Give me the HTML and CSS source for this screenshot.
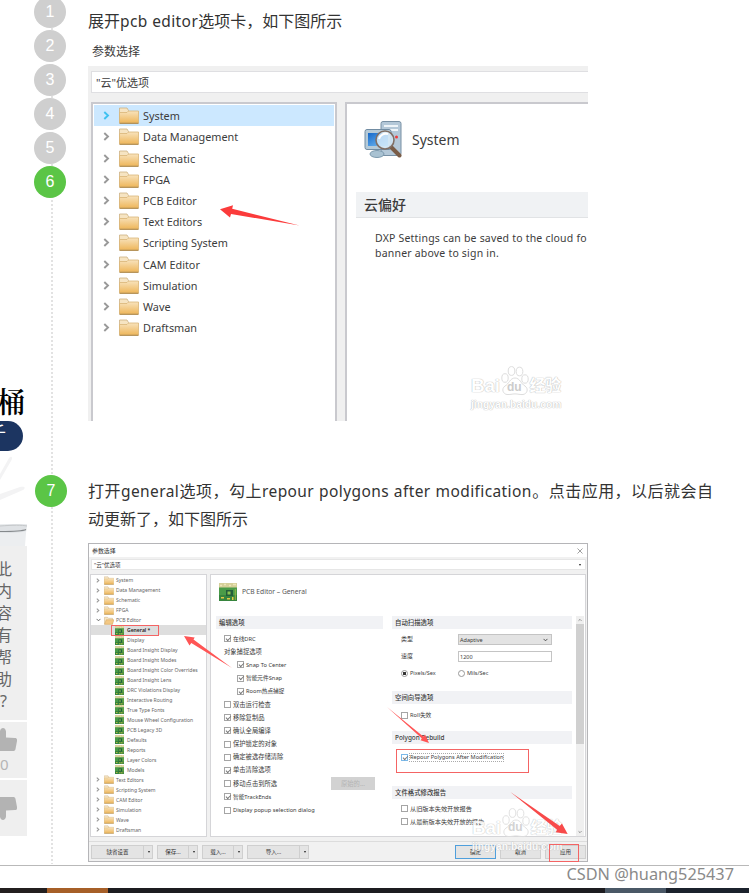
FILE: index.html
```html
<!DOCTYPE html>
<html lang="zh-CN">
<head>
    <meta charset="UTF-8">
    <meta name="viewport" content="width=device-width, initial-scale=1.0">
    <title>百度经验</title>
    <link rel="stylesheet" href="styles.css">
</head>
<body>
    <svg class="sprite" width="0" height="0">
        <defs>
            <linearGradient id="folderFill" x1="0" y1="0" x2="0" y2="1">
                <stop offset="0" stop-color="#f8e3bd"/>
                <stop offset="1" stop-color="#eeb65a"/>
            </linearGradient>
            <linearGradient id="screenFill" x1="0" y1="0" x2="1" y2="1">
                <stop offset="0" stop-color="#1668c8"/>
                <stop offset="1" stop-color="#7cc4f8"/>
            </linearGradient>
        </defs>
        <symbol id="folder" viewBox="0 0 20 17">
            <path d="M.5 15V1h7.500l1.500 2.500V15z" fill="#f6e4c2" stroke="#cdb184" stroke-width=".8"/>
            <path d="M.5 16V5.500H8l1.500-1.500h10v12z" fill="url(#folderFill)" stroke="#d9b577" stroke-width=".8"/>
            <path d="M.5 16.300h19" stroke="#a98242" stroke-width="1"/>
        </symbol>
        <symbol id="folder-open" viewBox="0 0 20 17">
            <path d="M1 16V2h6l2 2h8v12z" fill="#f6e4c2" stroke="#cdb184"/>
            <path d="M1 16l3.500-9H20l-3 9z" fill="#f3c884" stroke="#cc9d50" stroke-width=".8"/>
        </symbol>
        <symbol id="chevron" viewBox="0 0 7 9">
            <path d="M1.300 1l3.700 3.500-3.700 3.500" fill="none" stroke="currentColor" stroke-width="1.900"/>
        </symbol>
        <symbol id="chevron-down" viewBox="0 0 9 7">
            <path d="M1 1.500l3.500 3.500L8 1.500" fill="none" stroke="currentColor" stroke-width="1.500"/>
        </symbol>
        <symbol id="board" viewBox="0 0 18 18">
            <path d="M0 0h18v6H0z" fill="#d5cf98"/>
            <path d="M0 4.500h18V18H0z" fill="#4a9b48"/>
            <path d="M0 12h18v6H0z" fill="#37853e"/>
            <path d="M1 2.500h2m2-1h2m3 1h2m2-1h3" stroke="#eee6b8" stroke-width="1.500"/>
            <path d="M7 7h7v6H7z" fill="#245e3b"/>
            <path d="M8.500 8.500h3v3h-3z" fill="#8ac44f"/>
            <path d="M2 14h3v1.500H2zM8 15h3v1.500H8zM13 14h1.500v3H13z" fill="#e4c846"/>
            <path d="M16.300 6v11" stroke="#a9bd47" stroke-width=".8"/>
        </symbol>
        <symbol id="arrow-se" viewBox="0 0 60 45">
            <path d="M0 0L49 39.500l-1.500 2.500L60 44 54 33l-2.300 2.600z" fill="#f84a4a"/>
        </symbol>
        <symbol id="paw" viewBox="0 0 28 30">
            <ellipse cx="4" cy="12" rx="3.200" ry="4.300"/>
            <ellipse cx="10.500" cy="5" rx="3.300" ry="4.400"/>
            <ellipse cx="18.500" cy="5.500" rx="3.300" ry="4.300"/>
            <ellipse cx="24" cy="13" rx="3.200" ry="4.200"/>
            <path d="M14 12c-5 0-6 6-10 8-4 3-2 8 2 8.500 3 .3 5-.6 8-.6s5 .9 8 .6c4-.5 6-5.500 2-8.500-4-2-5-8-10-8z"/>
        </symbol>
        <symbol id="thumb" viewBox="0 0 30 24">
            <path d="M2 11h5c3-1 4.500-4 6-8 .8-4 5.500-4 6 .5V9.500l9 .5c1.700 0 2.200 1 2 3l-1.500 8c-.3 1.500-1 2-2.500 2H2z" fill="#b3b3b3"/>
        </symbol>
    </svg>

    <main class="steps">
        <section class="step step-first">
            <div class="rail">
                <span class="badge">1</span>
                <span class="badge">2</span>
                <span class="badge">3</span>
                <span class="badge">4</span>
                <span class="badge">5</span>
                <span class="badge active">6</span>
            </div>
            <div class="step-body">
                <p class="step-text">展开<span class="en">pcb editor</span>选项卡，如下图所示</p>

                <div class="shot">
                    <div class="shot-title">参数选择</div>
                    <div class="shot-main">
                        <div class="search">"云"优选项</div>
                        <div class="panes">
                            <ul class="tree">
                                <li class="selected"><svg class="chev"><use href="#chevron"/></svg><svg class="folder"><use href="#folder"/></svg>System</li>
                                <li><svg class="chev"><use href="#chevron"/></svg><svg class="folder"><use href="#folder"/></svg>Data Management</li>
                                <li><svg class="chev"><use href="#chevron"/></svg><svg class="folder"><use href="#folder"/></svg>Schematic</li>
                                <li><svg class="chev"><use href="#chevron"/></svg><svg class="folder"><use href="#folder"/></svg>FPGA</li>
                                <li><svg class="chev"><use href="#chevron"/></svg><svg class="folder"><use href="#folder"/></svg>PCB Editor</li>
                                <li><svg class="chev"><use href="#chevron"/></svg><svg class="folder"><use href="#folder"/></svg>Text Editors</li>
                                <li><svg class="chev"><use href="#chevron"/></svg><svg class="folder"><use href="#folder"/></svg>Scripting System</li>
                                <li><svg class="chev"><use href="#chevron"/></svg><svg class="folder"><use href="#folder"/></svg>CAM Editor</li>
                                <li><svg class="chev"><use href="#chevron"/></svg><svg class="folder"><use href="#folder"/></svg>Simulation</li>
                                <li><svg class="chev"><use href="#chevron"/></svg><svg class="folder"><use href="#folder"/></svg>Wave</li>
                                <li><svg class="chev"><use href="#chevron"/></svg><svg class="folder"><use href="#folder"/></svg>Draftsman</li>
                            </ul>
                            <div class="detail">
                                <div class="detail-head">
                                    <svg width="38" height="40" viewBox="0 0 38 40">
                                        <rect x="17" y="1.500" width="20" height="34" rx="2" fill="#b4c8d8" stroke="#7890a4"/>
                                        <path d="M20 6h14M20 10h14" stroke="#eef4f8" stroke-width="2"/>
                                        <circle cx="32.500" cy="17" r="1.500" fill="#f03a3a"/>
                                        <ellipse cx="13" cy="34" rx="7" ry="3.500" fill="#a9c2d2" stroke="#7d9aae"/>
                                        <rect x="1" y="9.500" width="26" height="20" rx="2" fill="#b5cad8" stroke="#718ca2"/>
                                        <rect x="4" y="13" width="20" height="13" fill="url(#screenFill)"/>
                                        <path d="M27 27l8.500 8.500" stroke="#795c47" stroke-width="4" stroke-linecap="round"/>
                                        <circle cx="21" cy="20" r="9" fill="#d8ecfa" fill-opacity=".82" stroke="#806f65" stroke-width="1.600"/>
                                        <path d="M15 19a7 7 0 0 1 9-5" stroke="#fff" stroke-width="2" fill="none"/>
                                    </svg>
                                    <span>System</span>
                                </div>
                                <h3>云偏好</h3>
                                <p>DXP Settings can be saved to the cloud fo<br>banner above to sign in.</p>
                            </div>
                        </div>
                    </div>
                    <svg class="arrow-left" viewBox="0 0 80 22"><path d="M0 4.300L13 .2l-.8 3.600L79.500 20.500 11 9l-1 3.600z" fill="#fb3b3b"/></svg>
                    <div class="baidu faint">
                        <div class="baidu-name"><span>Bai</span><svg><use href="#paw"/></svg><span>经验</span></div>
                        <span class="du">du</span>
                        <div class="baidu-url">jingyan.baidu.com</div>
                    </div>
                </div>
            </div>
        </section>

        <section class="step step-second">
            <div class="rail">
                <span class="badge active">7</span>
            </div>
            <div class="step-body">
                <p class="step-text"><span class="full">打开<span class="en">general</span>选项，勾上<span class="en">repour polygons after modification</span>。点击应用，以后就会自</span>动更新了，如下图所示</p>

                <div class="dialog">
                    <div class="dialog-title">参数选择<svg width="6" height="6" viewBox="0 0 6 6"><path d="M.5.5l5 5m0-5l-5 5" stroke="#777" stroke-width=".7"/></svg></div>
                    <div class="dialog-search">"云"优选项<i class="caret"></i></div>
                    <div class="dialog-panes">
                        <ul class="mini-tree">
                            <li><svg class="chev"><use href="#chevron"/></svg><svg class="folder"><use href="#folder"/></svg>System</li>
                            <li><svg class="chev"><use href="#chevron"/></svg><svg class="folder"><use href="#folder"/></svg>Data Management</li>
                            <li><svg class="chev"><use href="#chevron"/></svg><svg class="folder"><use href="#folder"/></svg>Schematic</li>
                            <li><svg class="chev"><use href="#chevron"/></svg><svg class="folder"><use href="#folder"/></svg>FPGA</li>
                            <li class="open"><svg class="chev"><use href="#chevron-down"/></svg><svg class="folder"><use href="#folder-open"/></svg>PCB Editor</li>
                            <li class="sub current"><svg class="board"><use href="#board"/></svg>General *</li>
                            <li class="sub"><svg class="board"><use href="#board"/></svg>Display</li>
                            <li class="sub"><svg class="board"><use href="#board"/></svg>Board Insight Display</li>
                            <li class="sub"><svg class="board"><use href="#board"/></svg>Board Insight Modes</li>
                            <li class="sub"><svg class="board"><use href="#board"/></svg>Board Insight Color Overrides</li>
                            <li class="sub"><svg class="board"><use href="#board"/></svg>Board Insight Lens</li>
                            <li class="sub"><svg class="board"><use href="#board"/></svg>DRC Violations Display</li>
                            <li class="sub"><svg class="board"><use href="#board"/></svg>Interactive Routing</li>
                            <li class="sub"><svg class="board"><use href="#board"/></svg>True Type Fonts</li>
                            <li class="sub"><svg class="board"><use href="#board"/></svg>Mouse Wheel Configuration</li>
                            <li class="sub"><svg class="board"><use href="#board"/></svg>PCB Legacy 3D</li>
                            <li class="sub"><svg class="board"><use href="#board"/></svg>Defaults</li>
                            <li class="sub"><svg class="board"><use href="#board"/></svg>Reports</li>
                            <li class="sub"><svg class="board"><use href="#board"/></svg>Layer Colors</li>
                            <li class="sub"><svg class="board"><use href="#board"/></svg>Models</li>
                            <li><svg class="chev"><use href="#chevron"/></svg><svg class="folder"><use href="#folder"/></svg>Text Editors</li>
                            <li><svg class="chev"><use href="#chevron"/></svg><svg class="folder"><use href="#folder"/></svg>Scripting System</li>
                            <li><svg class="chev"><use href="#chevron"/></svg><svg class="folder"><use href="#folder"/></svg>CAM Editor</li>
                            <li><svg class="chev"><use href="#chevron"/></svg><svg class="folder"><use href="#folder"/></svg>Simulation</li>
                            <li><svg class="chev"><use href="#chevron"/></svg><svg class="folder"><use href="#folder"/></svg>Wave</li>
                            <li><svg class="chev"><use href="#chevron"/></svg><svg class="folder"><use href="#folder"/></svg>Draftsman</li>
                        </ul>
                        <div class="settings">
                            <div class="settings-head"><svg class="big-board"><use href="#board"/></svg>PCB Editor – General</div>
                            <div class="settings-body">
                                <div class="col-left">
                                    <h4>编辑选项</h4>
                                    <ul class="checks">
                                        <li><i class="box on"></i>在线DRC</li>
                                        <li class="zh">对象捕捉选项</li>
                                        <li class="indent"><i class="box on"></i>Snap To Center</li>
                                        <li class="indent"><i class="box on"></i>智能元件Snap</li>
                                        <li class="indent"><i class="box on"></i>Room热点捕捉</li>
                                        <li class="zh"><i class="box"></i>双击运行检查</li>
                                        <li class="zh"><i class="box on"></i>移除复制品</li>
                                        <li class="zh"><i class="box on"></i>确认全局编译</li>
                                        <li class="zh"><i class="box"></i>保护锁定的对象</li>
                                        <li class="zh"><i class="box"></i>确定被选存储清除</li>
                                        <li class="zh"><i class="box on"></i>单击清除选项</li>
                                        <li class="zh"><i class="box"></i>移动点击到所选<span class="disabled">原始的...</span></li>
                                        <li><i class="box on"></i>智能TrackEnds</li>
                                        <li><i class="box"></i>Display popup selection dialog</li>
                                    </ul>
                                </div>
                                <div class="col-right">
                                    <h4>自动扫描选项</h4>
                                    <div class="field type"><label>类型</label><span class="combo">Adaptive<svg width="5" height="4" viewBox="0 0 9 7"><use href="#chevron-down"/></svg></span></div>
                                    <div class="field speed"><label>速度</label><span class="input">1200</span></div>
                                    <div class="radios"><span><i class="radio on"></i>Pixels/Sex</span><span><i class="radio"></i>Mils/Sec</span></div>
                                    <h4>空间向导选项</h4>
                                    <div class="line roll"><i class="box"></i>Roll失效</div>
                                    <h4>Polygon Rebuild</h4>
                                    <div class="repour"><i class="box on blue"></i><span>Repour Polygons After Modification</span></div>
                                    <h4>文件格式修改报告</h4>
                                    <div class="line report"><i class="box"></i>从旧版本失效开放报告</div>
                                    <div class="line"><i class="box"></i>从最新版本失效开放的报告</div>
                                </div>
                                <div class="scrollbar">
                                    <svg class="up" viewBox="0 0 9 7"><use href="#chevron-down"/></svg>
                                    <div class="thumb"></div>
                                    <svg viewBox="0 0 9 7"><use href="#chevron-down"/></svg>
                                </div>
                            </div>
                        </div>
                    </div>
                    <div class="dialog-foot">
                        <div class="btn drop wide"><span>缺省设置</span><i class="caret"></i></div>
                        <div class="btn drop"><span>保存...</span><i class="caret"></i></div>
                        <div class="btn drop"><span>载入...</span><i class="caret"></i></div>
                        <div class="btn drop wide"><span>导入...</span><i class="caret"></i></div>
                        <div class="btn primary">确定</div>
                        <div class="btn">取消</div>
                        <div class="btn">应用</div>
                    </div>

                    <div class="mark mark-general"></div>
                    <div class="baidu strong">
                        <div class="baidu-name"><span>Bai</span><svg><use href="#paw"/></svg><span>经验</span></div>
                        <span class="du">du</span>
                        <div class="baidu-url">jingyan.baidu.com</div>
                    </div>
                    <div class="mark mark-apply"></div>
                    <svg class="arrow a1" viewBox="0 0 48 32"><path d="M48 32L9.500 3.500l1.200-2L0 0l5.500 9.500 1.800-2.500z" fill="#f55"/></svg>
                    <svg class="arrow a2" viewBox="0 0 42 36"><path d="M0 0l35 31.500-1.500 1.800L42 36l-4-8.500-1.700 2z" fill="#f55"/></svg>
                    <svg class="arrow a3"><use href="#arrow-se"/></svg>
                </div>
            </div>
        </section>
    </main>

    <!-- 左侧悬浮栏 -->
    <aside class="side">
        <div class="ad">
            <div class="ad-title">桶</div>
            <div class="ad-pill">千</div>
            <svg class="ad-pic" width="28" height="95" viewBox="0 0 28 95">
                <path d="M0 23L9 7c3-3 4 0 2 3L0 29z" fill="#f3f3f4"/>
                <path d="M0 43l20-7c5-1 6 1 3 3L0 49z" fill="#f3f3f4"/>
                <path d="M0 73h27l-1 9-1 13H0z" fill="#eceef0"/>
                <path d="M0 74c14-1 24-1 27 0l-1 6c-6 2-17 2-26 2z" fill="#dfe2e5"/>
                <path d="M0 80.500c13 0 22 0 26-2" stroke="#85898c" stroke-width="1.200" fill="none"/>
                <path d="M0 75c13-1 22-1 27 0" stroke="#c5c8ca" fill="none"/>
            </svg>
        </div>
        <div class="help">此<br>内<br>容<br>有<br>帮<br>助<br><span>?</span></div>
        <div class="vote"><svg><use href="#thumb"/></svg><span>0</span></div>
        <div class="vote down"><svg><use href="#thumb"/></svg></div>
    </aside>

    <footer>
        <div class="credit">CSDN @huang525437</div>
        <div class="strip"><i class="s1"></i><i class="s2"></i><i class="s3"></i><i class="s4"></i><i class="s5"></i></div>
    </footer>
</body>
</html>
```

FILE: styles.css
```css
* {
    margin: 0;
    padding: 0;
    box-sizing: border-box;
}

body {
    width: 749px;
    height: 893px;
    position: relative;
    overflow: hidden;
    background: #fff;
    color: #333;
    font-family: "Noto Sans", "Noto Sans CJK SC", sans-serif;
}

ul {
    list-style: none;
}

i {
    font-style: normal;
}

.sprite {
    position: absolute;
}

.steps {
    height: 866px;
    border-bottom: 1px solid #b9b9b9;
    overflow: hidden;
}

.step {
    display: grid;
    grid-template-columns: 88px 1fr;
}

.step-first {
    height: 475px;
}

.step-second {
    height: 389px;
}

/* 步骤序号 */
.rail {
    display: flex;
    flex-direction: column;
    gap: 2px;
    padding-left: 34px;
    background: repeating-linear-gradient(#e2e2e2 0 2px, #fff 2px 4px) 51px 0 / 2px 100% no-repeat;
}

.step-first .rail {
    margin-top: -4px;
}

.step-second .rail {
    padding-left: 35px;
}

.badge {
    width: 32px;
    height: 32px;
    flex: none;
    border-radius: 50%;
    background: #cfcfcf;
    color: #fff;
    font: 16px/32px "Liberation Sans", sans-serif;
    text-align: center;
}

.badge.active {
    background: #5bc546;
}

.step-text {
    height: 28px;
    margin-top: 7px;
    font-size: 16px;
    line-height: 28px;
    white-space: nowrap;
}

.step-text .en {
    font-size: 15.5px;
    letter-spacing: .4px;
}

.step-text .full {
    display: block;
    width: 625px;
    height: 28px;
    text-align: justify;
    text-align-last: justify;
    white-space: normal;
}

.step-second .step-text {
    height: 56px;
    margin-top: 2px;
}

/* 第一张图 */
.shot {
    position: relative;
    width: 500px;
    height: 385px;
    margin-top: 1px;
    overflow: hidden;
    color: #3c3c3c;
}

.shot-title {
    height: 30px;
    padding-left: 4px;
    font-size: 12px;
    line-height: 31px;
}

.shot-main {
    height: 355px;
    padding: 5px 0 0 3px;
    background: #f0f0f0;
}

.search {
    height: 22px;
    padding-left: 4px;
    border: 1px solid #dfdfe2;
    border-right: 0;
    background: #fff;
    font-size: 11px;
    line-height: 22px;
}

.panes {
    display: grid;
    grid-template-columns: 246px 1fr;
    gap: 8px;
    height: 319px;
    margin-top: 9px;
}

.tree {
    padding: 1px 1px 0;
    border: 2px solid #c9c9ce;
    border-width: 2px 2px 0;
    background: #fff;
    font-size: 10.85px;
}

.tree li {
    display: flex;
    align-items: center;
    height: 21.22px;
    padding-left: 9px;
    white-space: nowrap;
}

.tree .selected {
    background: #cce8ff;
}

.chev {
    width: 7px;
    height: 9px;
    margin-right: 9px;
    color: #999;
}

.selected .chev {
    color: #3fc1f0;
}

.folder {
    width: 20px;
    height: 17px;
    margin-right: 4px;
}

.detail {
    padding-left: 9px;
    border: 2px solid #c9c9ce;
    border-width: 2px 0 0 2px;
    background: #fff;
}

.detail-head {
    display: flex;
    gap: 10px;
    height: 88px;
    padding: 16px 0 0 8px;
    font-size: 14px;
    line-height: 40px;
}

.detail h3 {
    height: 26px;
    padding-left: 8px;
    border-bottom: 1px solid #e1e3e5;
    background: #f0f2f4;
    font-size: 14px;
    font-weight: 500;
    line-height: 26px;
}

.detail p {
    padding: 13px 0 0 19px;
    font-size: 10.5px;
    letter-spacing: .2px;
    line-height: 15px;
    white-space: nowrap;
}

.arrow-left {
    position: absolute;
    left: 132px;
    top: 169px;
    width: 80px;
    height: 22px;
}

/* 百度经验水印 */
.baidu {
    position: absolute;
    left: 383px;
    width: 92px;
    height: 48px;
    color: #fff;
    fill: #fff;
    stroke: #ddd;
    font-family: "Liberation Sans", "Noto Sans CJK SC", sans-serif;
    font-weight: bold;
    text-shadow: 0 0 1px #bbb, 0 0 1px #bbb;
}

.baidu.faint {
    top: 330px;
}

.baidu.strong {
    top: 264px;
    opacity: .85;
}

.baidu-name {
    display: flex;
    align-items: flex-end;
    justify-content: space-between;
    width: 90px;
    height: 32px;
    font-size: 19px;
    letter-spacing: -.3px;
    line-height: 24px;
}

.baidu-name span:last-child {
    font-size: 16px;
}

.baidu-name svg {
    width: 28px;
    height: 30px;
    flex: none;
    margin-bottom: 2px;
}

.baidu .du {
    position: absolute;
    left: 36px;
    top: 14px;
    color: #ccc;
    font-size: 12px;
    text-shadow: none;
}

.baidu-url {
    font-size: 10.3px;
    line-height: 14px;
}

/* 第二张图 */
.dialog {
    position: relative;
    width: 500px;
    height: 319px;
    margin-top: 10px;
    border: 1px solid #b5b5b8;
    background: #f1f1f1;
    color: #555;
    font-size: 5.5px;
    line-height: 10px;
}

.dialog-title {
    display: flex;
    align-items: center;
    justify-content: space-between;
    height: 13px;
    padding: 0 4px 0 3px;
    background: #fff;
    color: #333;
    font-size: 5.9px;
}

.dialog-search {
    display: flex;
    align-items: center;
    justify-content: space-between;
    height: 11px;
    margin: 2px 1px 0 2px;
    padding: 0 4px 0 2px;
    border: 1px solid #e6e6e6;
    background: #fff;
    color: #333;
}

.caret {
    border: 1.5px solid transparent;
    border-top: 2px solid #222;
    border-bottom: 0;
}

.dialog-panes {
    display: grid;
    grid-template-columns: 117px 376px;
    gap: 3px;
    height: 263px;
    margin: 4px 0 0 1px;
}

.mini-tree {
    padding-top: .4px;
    border: 1px solid #d5d5d8;
    background: #fff;
    color: #666;
    font-size: 5.05px;
}

.mini-tree li {
    display: flex;
    align-items: center;
    height: 9.97px;
    padding-left: 5px;
    white-space: nowrap;
}

.mini-tree .chev {
    width: 4px;
    height: 5px;
    margin-right: 4px;
}

.mini-tree .open .chev {
    width: 5px;
    height: 4px;
    margin-right: 3px;
    color: #555;
}

.mini-tree .folder {
    width: 10px;
    height: 9px;
    margin-right: 2px;
}

.mini-tree .sub {
    padding-left: 24px;
}

.mini-tree .board {
    width: 9px;
    height: 9px;
    margin-right: 3px;
}

.mini-tree .current {
    background: #dedede;
    color: #222;
    font-weight: 600;
}

.settings {
    border: 1px solid #d5d5d8;
    background: #fff;
}

.settings-head {
    display: flex;
    align-items: center;
    gap: 5px;
    height: 41px;
    padding: 0 0 7px 8px;
    font-size: 6.7px;
}

.big-board {
    width: 18px;
    height: 18px;
}

.settings-body {
    display: grid;
    grid-template-columns: 167px 180px 8px;
    column-gap: 9px;
    height: 220px;
    padding-left: 5px;
    color: #3a3a3a;
}

.settings h4 {
    height: 13px;
    padding-left: 3px;
    background: #f1f2f5;
    font-size: 6.4px;
    font-weight: 500;
    line-height: 13px;
}

.checks {
    padding: 3px 0 0 8px;
}

.checks li {
    display: flex;
    align-items: center;
    height: 13.2px;
    font-size: 5.7px;
    white-space: nowrap;
}

.checks .zh {
    font-size: 6.3px;
}

.checks .indent {
    padding-left: 13px;
}

.box {
    position: relative;
    width: 7px;
    height: 7px;
    flex: none;
    margin-right: 2px;
    border: 1px solid #a5a5a5;
    background: #fff;
}

.box.on::after {
    content: "";
    position: absolute;
    left: .8px;
    top: .8px;
    width: 3.5px;
    height: 2px;
    border: solid #777;
    border-width: 0 0 1px 1px;
    transform: rotate(-45deg);
}

.box.blue {
    border-color: #7ab8e8;
}

.disabled {
    width: 44px;
    height: 13px;
    margin-left: auto;
    margin-right: 8px;
    background: #d2d2d2;
    color: #b4b4b4;
    text-align: center;
    line-height: 13px;
}

.field {
    display: flex;
    height: 11px;
    padding-left: 9px;
}

.field label {
    width: 57px;
    font-size: 6px;
}

.type {
    margin-top: 5px;
}

.speed {
    margin-top: 6px;
}

.combo,
.input {
    display: flex;
    align-items: center;
    justify-content: space-between;
    width: 94px;
    padding: 0 3px 0 1px;
    border: 1px solid #c4c4c4;
}

.combo {
    background: #e3e3e3;
}

.radios {
    display: grid;
    grid-template-columns: 57px 1fr;
    height: 29px;
    padding: 6px 0 0 9px;
}

.radios span {
    display: flex;
    height: 10px;
    align-items: center;
}

.radio {
    width: 7px;
    height: 7px;
    margin-right: 2px;
    border: 1px solid #999;
    border-radius: 50%;
}

.radio.on {
    background: radial-gradient(#333 0 1.4px, #fff 2px);
}

.line {
    display: flex;
    align-items: center;
    height: 13.2px;
    padding-left: 9px;
    font-size: 6.2px;
}

.roll {
    height: 27px;
    padding-bottom: 5px;
    font-size: 5.7px;
}

.report {
    margin-top: 3px;
}

.repour {
    display: flex;
    align-items: center;
    width: 133px;
    height: 24px;
    margin: 5px 0 13px 4px;
    padding: 0 0 7px 4px;
    border: 1px solid #f46464;
    font-size: 5.6px;
}

.repour span {
    outline: 1px dotted #aaa;
    line-height: 7px;
}

.scrollbar {
    display: flex;
    flex-direction: column;
    width: 8px;
    margin-left: -5px;
    background: #efefef;
}

.scrollbar svg {
    width: 4px;
    height: 8px;
    margin: 0 2px;
    color: #666;
}

.scrollbar .up {
    transform: rotate(180deg);
}

.scrollbar .thumb {
    height: 120px;
    margin-bottom: auto;
    background: #d0d0d0;
}

.dialog-foot {
    display: flex;
    gap: 4px;
    margin-top: 4px;
    padding: 3px 1px 0 2px;
    border-top: 1px solid #dcdcdc;
}

.btn {
    width: 41px;
    height: 14px;
    border: 1px solid #cfcfcf;
    background: #e4e4e4;
    color: #333;
    text-align: center;
    line-height: 12px;
}

.btn.drop {
    display: flex;
    align-items: center;
    padding-right: 2px;
}

.btn.drop span {
    flex: 1;
    margin-right: 4px;
    border-right: 1px solid #cfcfcf;
}

.btn.wide {
    width: 62px;
}

.btn.primary {
    margin-left: auto;
    border-color: #4f9fdc;
}

.mark {
    position: absolute;
    border: 1px solid #f46464;
}

.mark-general {
    left: 22px;
    top: 81px;
    width: 48px;
    height: 11px;
}

.mark-apply {
    left: 460px;
    top: 300px;
    width: 30px;
    height: 18px;
}

.arrow {
    position: absolute;
}

.a1 {
    left: 95px;
    top: 92px;
    width: 48px;
    height: 32px;
}

.a2 {
    left: 298px;
    top: 163px;
    width: 42px;
    height: 36px;
}

.a3 {
    left: 420px;
    top: 248px;
    width: 60px;
    height: 43px;
}

/* 左侧悬浮栏 */
.side {
    position: absolute;
    left: 0;
    top: 386px;
    width: 27px;
    overflow: hidden;
}

.ad {
    height: 160px;
}

.ad-title {
    height: 35px;
    margin-left: -3px;
    color: #000;
    font: 600 28px/30px "Noto Serif CJK SC", "Noto Sans CJK SC", serif;
    white-space: nowrap;
}

.ad-pill {
    width: 23px;
    height: 30px;
    border-radius: 0 15px 15px 0;
    background: #1c3561;
    color: #fff;
    font-size: 18px;
    line-height: 24px;
    text-indent: -12px;
}

.ad-pic {
    display: block;
}

.help {
    width: 31px;
    height: 174px;
    margin: 0 0 2px -4px;
    padding-top: 12px;
    background: #efefef;
    color: #666;
    font-size: 16px;
    line-height: 22px;
}

.help span {
    margin-left: 4px;
}

.vote {
    height: 56px;
    margin-bottom: 2px;
    padding-top: 6px;
    background: #efefef;
    color: #b5b5b5;
    font-size: 15px;
    line-height: 24px;
}

.vote svg {
    display: block;
    width: 30px;
    height: 24px;
    margin-left: -13px;
}

.vote.down {
    padding-top: 16px;
}

.vote.down svg {
    transform: scaleY(-1);
}

/* 页脚 */
footer {
    display: flex;
    flex-direction: column;
    height: 27px;
}

.credit {
    height: 22px;
    padding-right: 15px;
    color: #8a8a8a;
    font-size: 16.3px;
    line-height: 16px;
    text-align: right;
}

.strip {
    display: flex;
    height: 5px;
}

.s1 {
    width: 47px;
    background: #231f1f;
}

.s2 {
    width: 61px;
    background: #a65f28;
}

.s3 {
    width: 497px;
    background: #1d1c20;
}

.s4 {
    width: 61px;
    background: #4a5866;
}

.s5 {
    flex: 1;
    background: #1b222c;
}
```
